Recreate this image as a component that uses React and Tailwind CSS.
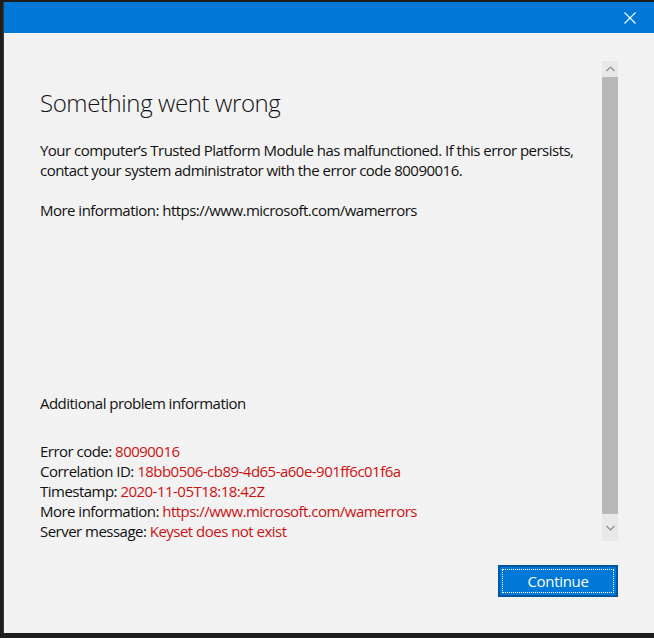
import React from "react";

const font = { fontFamily: '"Open Sans", "Noto Sans", "Liberation Sans", sans-serif' };

function Row({ label, value }) {
  return (
    <div className="h-[20px] leading-[20px]">
      <span className="text-[#111]">{label} </span>
      <span className="text-[#cc1111]">{value}</span>
    </div>
  );
}

export default function App() {
  return (
    <div
      className="w-[654px] h-[638px] bg-[#1e1e1e] pt-[2px] pl-[3px] pb-[5px] flex flex-col"
      style={font}
    >
      <div className="flex-1 flex flex-col border-l border-[#3a3a3a]">
        <div className="h-[31px] bg-[#0078d7] flex items-center justify-end pr-[18px]">
          <svg width="12" height="12" viewBox="0 0 12 12" className="mt-[1px]">
            <path d="M0.5 0.5 L11.5 11.5 M11.5 0.5 L0.5 11.5" stroke="#ffffff" strokeWidth="1.1" fill="none" />
          </svg>
        </div>
        <div className="flex-1 bg-[#f2f2f2] flex flex-col pl-[36px] pr-[36px] pt-[28px] pb-[36px]">
          <div className="flex h-[480px]">
            <div className="flex-1 flex flex-col pt-[26px] text-[15px] tracking-[-0.52px] text-[#111]">
              <div className="text-[24px] leading-[32px] font-light tracking-[-0.4px] text-[#111]">
                Something went wrong
              </div>
              <div className="mt-[21px] leading-[20px]">
                Your computer’s Trusted Platform Module has malfunctioned. If this error persists,
                <br />
                contact your system administrator with the error code 80090016.
              </div>
              <div className="mt-[20px] leading-[20px]">
                More information: https://www.microsoft.com/wamerrors
              </div>
              <div className="mt-[173px] leading-[20px]">Additional problem information</div>
              <div className="mt-[28px]">
                <Row label="Error code:" value="80090016" />
                <Row label="Correlation ID:" value="18bb0506-cb89-4d65-a60e-901ff6c01f6a" />
                <Row label="Timestamp:" value="2020-11-05T18:18:42Z" />
                <Row label="More information:" value="https://www.microsoft.com/wamerrors" />
                <Row label="Server message:" value="Keyset does not exist" />
              </div>
            </div>
            <div className="w-[16px] flex flex-col bg-[#e8e8e8]">
              <div className="h-[16px] flex items-center justify-center">
                <svg width="9" height="6" viewBox="0 0 9 6">
                  <path d="M0.5 5 L4.5 1 L8.5 5" stroke="#8a8a8a" strokeWidth="1.2" fill="none" />
                </svg>
              </div>
              <div className="flex-1 bg-[#b8b8b8]" />
              <div className="h-[27px] flex items-center justify-center">
                <svg width="9" height="6" viewBox="0 0 9 6">
                  <path d="M0.5 1 L4.5 5 L8.5 1" stroke="#8a8a8a" strokeWidth="1.2" fill="none" />
                </svg>
              </div>
            </div>
          </div>
          <div className="flex justify-end mt-[24px]">
            <button className="w-[120px] h-[32px] bg-[#0078d7] border-2 border-[#00569e] p-[2px]">
              <div className="w-full h-full border border-dotted border-white flex items-center justify-center text-white text-[15px] leading-none tracking-[-0.3px]">
                Continue
              </div>
            </button>
          </div>
        </div>
      </div>
    </div>
  );
}
